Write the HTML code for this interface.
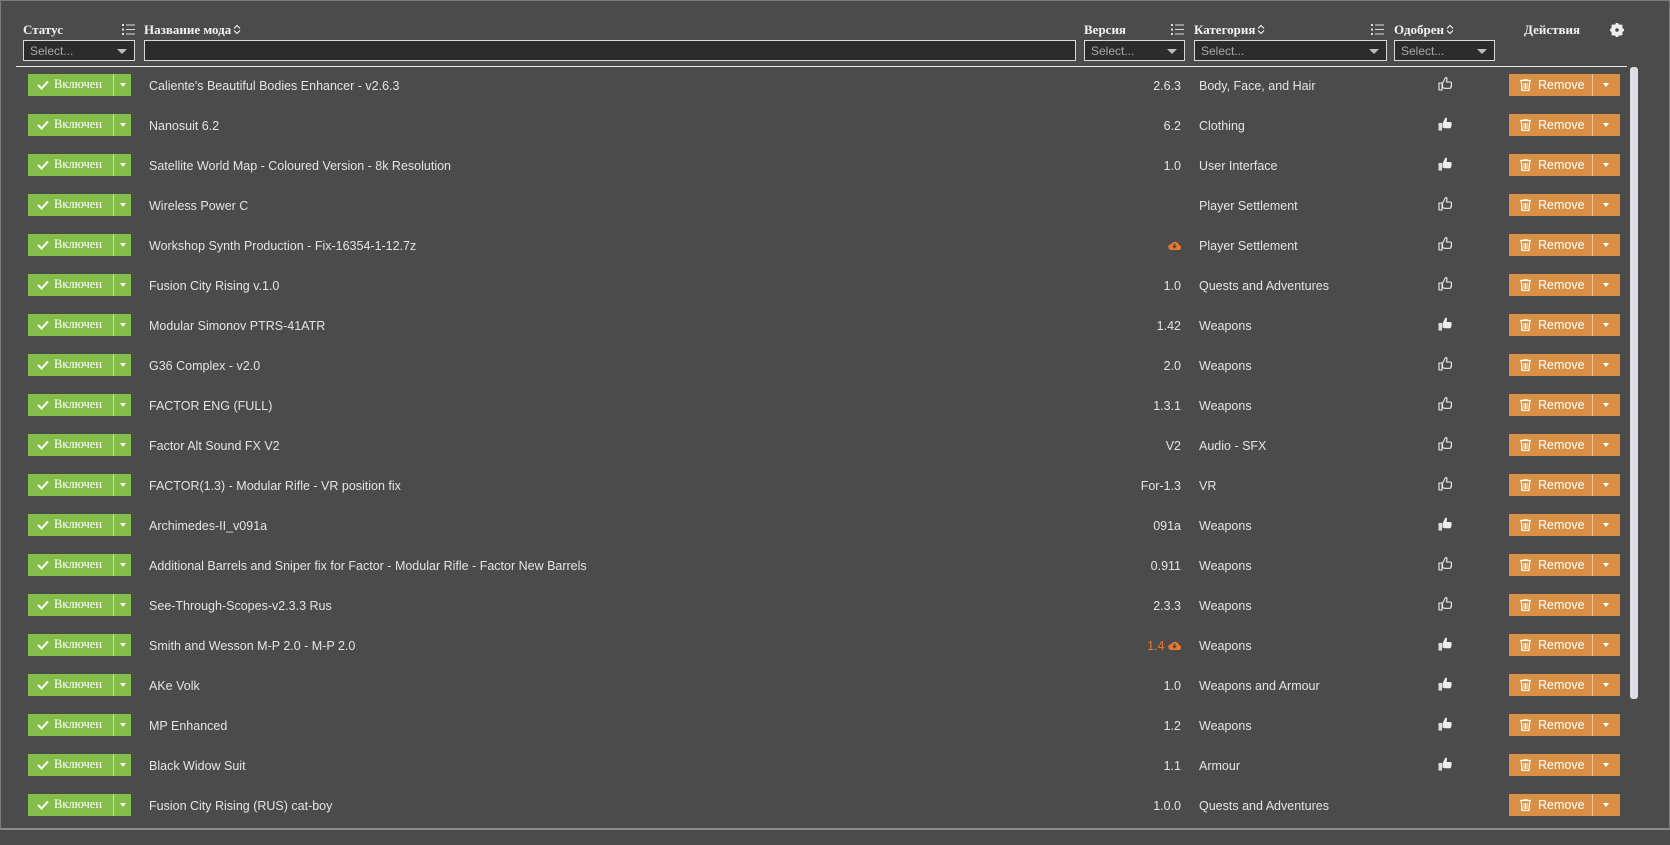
<!DOCTYPE html>
<html><head><meta charset="utf-8"><style>
*{box-sizing:border-box;margin:0;padding:0}
body{width:1670px;height:833px;background:#4b4b4b;font-family:"Liberation Sans",sans-serif;color:#e4e4e4;position:relative;overflow:hidden}
.frame{position:absolute;left:0;top:0;width:1670px;height:830px;border:1px solid #7a7a7a;border-bottom:2px solid #8a8a8a}
.a{position:absolute}
.hl{font-family:"Liberation Serif",serif;font-weight:bold;font-size:13px;color:#f2f2f2;top:22px}
.hl svg{vertical-align:-1px;margin-left:2px}
.sel{position:absolute;top:40px;height:21px;background:#2b2c2b;border:1px solid #d8d8d8;font-size:12px;color:#a9a9a9;padding:3px 0 0 6px}
.sel.dd:after{content:"";position:absolute;right:7px;top:8px;border-left:5px solid transparent;border-right:5px solid transparent;border-top:5px solid #bbb}
.row{position:absolute;left:0;width:1670px;height:40px;font-size:12.5px}
.en{position:absolute;left:28px;top:-11px;width:103px;height:22px;background:#85bd4a;color:#fff;font-family:"Liberation Serif",serif;font-size:12.5px}
.en .t{position:absolute;left:9px;top:3px}
.en .s{position:absolute;left:85px;top:0;width:1px;height:22px;background:#c7e2a8}
.en .c{position:absolute;left:92px;top:9px;border-left:3.5px solid transparent;border-right:3.5px solid transparent;border-top:4px solid #fff}
.nm{position:absolute;left:149px;top:-6px}
.ver{position:absolute;right:489px;top:-6px}
.cat{position:absolute;left:1199px;top:-6px}
.th{position:absolute;left:1438px;top:-9px}
.rm{position:absolute;left:1509px;top:-11px;width:111px;height:22px;background:#d98f46;color:#fff;font-size:12.5px}
.rm .t{position:absolute;left:29px;top:4px}
.rm .s{position:absolute;left:83px;top:0;width:1px;height:22px;background:#edc49a}
.rm .c{position:absolute;left:94px;top:9px;border-left:3.5px solid transparent;border-right:3.5px solid transparent;border-top:4px solid #fff}
.rm svg{position:absolute;left:11px;top:5px}
.or{color:#e8782a}
</style></head><body>
<div class="frame"></div>
<div class="a hl" style="left:23px">Статус</div>
<div class="a hl" style="left:144px">Название мода<svg width="8" height="11"><path d="M1 4.5L4 1.5 7 4.5M1 6.5L4 9.5 7 6.5" stroke="#eee" stroke-width="1.2" fill="none"/></svg></div>
<div class="a hl" style="left:1084px">Версия</div>
<div class="a hl" style="left:1194px">Категория<svg width="8" height="11"><path d="M1 4.5L4 1.5 7 4.5M1 6.5L4 9.5 7 6.5" stroke="#eee" stroke-width="1.2" fill="none"/></svg></div>
<div class="a hl" style="left:1394px">Одобрен<svg width="8" height="11"><path d="M1 4.5L4 1.5 7 4.5M1 6.5L4 9.5 7 6.5" stroke="#eee" stroke-width="1.2" fill="none"/></svg></div>
<div class="a hl" style="left:1524px">Действия</div>
<svg class="a" style="left:122px;top:23px" width="14" height="13"><g fill="#ddd"><rect x="0" y="1" width="2" height="2"/><rect x="0" y="5.5" width="2" height="2"/><rect x="0" y="10" width="2" height="2"/><rect x="4" y="1.5" width="9" height="1"/><rect x="4" y="6" width="9" height="1"/><rect x="4" y="10.5" width="9" height="1"/></g></svg>
<svg class="a" style="left:1171px;top:23px" width="14" height="13"><g fill="#ddd"><rect x="0" y="1" width="2" height="2"/><rect x="0" y="5.5" width="2" height="2"/><rect x="0" y="10" width="2" height="2"/><rect x="4" y="1.5" width="9" height="1"/><rect x="4" y="6" width="9" height="1"/><rect x="4" y="10.5" width="9" height="1"/></g></svg>
<svg class="a" style="left:1371px;top:23px" width="14" height="13"><g fill="#ddd"><rect x="0" y="1" width="2" height="2"/><rect x="0" y="5.5" width="2" height="2"/><rect x="0" y="10" width="2" height="2"/><rect x="4" y="1.5" width="9" height="1"/><rect x="4" y="6" width="9" height="1"/><rect x="4" y="10.5" width="9" height="1"/></g></svg>
<svg class="a" style="left:1610px;top:23px" width="14" height="14" viewBox="0 0 14 14"><circle cx="7" cy="7" r="4.5" fill="none" stroke="#eee" stroke-width="3"/><g stroke="#eee" stroke-width="2.6"><line x1="7" y1="0" x2="7" y2="14"/><line x1="0" y1="7" x2="14" y2="7"/><line x1="2" y1="2" x2="12" y2="12"/><line x1="12" y1="2" x2="2" y2="12"/></g><circle cx="7" cy="7" r="1.8" fill="#4b4b4b"/></svg>
<div class="sel dd" style="left:23px;width:112px">Select...</div>
<div class="sel" style="left:144px;width:932px"></div>
<div class="sel dd" style="left:1084px;width:101px">Select...</div>
<div class="sel dd" style="left:1194px;width:193px">Select...</div>
<div class="sel dd" style="left:1394px;width:101px">Select...</div>
<div class="a" style="left:16px;top:66px;width:1611px;height:1px;background:#e8e8e8"></div>
<div class="a" style="left:1630px;top:67px;width:8px;height:632px;background:#dcdfe3;border-radius:3px"></div>
<div id="rows"></div>
<script>
var d=[["Caliente's Beautiful Bodies Enhancer - v2.6.3","2.6.3","Body, Face, and Hair",0],
["Nanosuit 6.2","6.2","Clothing",1],
["Satellite World Map - Coloured Version - 8k Resolution","1.0","User Interface",1],
["Wireless Power C","","Player Settlement",0],
["Workshop Synth Production - Fix-16354-1-12.7z","C","Player Settlement",0],
["Fusion City Rising v.1.0","1.0","Quests and Adventures",0],
["Modular Simonov PTRS-41ATR","1.42","Weapons",1],
["G36 Complex - v2.0","2.0","Weapons",0],
["FACTOR ENG (FULL)","1.3.1","Weapons",0],
["Factor Alt Sound FX V2","V2","Audio - SFX",0],
["FACTOR(1.3) - Modular Rifle - VR position fix","For-1.3","VR",0],
["Archimedes-II_v091a","091a","Weapons",1],
["Additional Barrels and Sniper fix for Factor - Modular Rifle - Factor New Barrels","0.911","Weapons",0],
["See-Through-Scopes-v2.3.3 Rus","2.3.3","Weapons",0],
["Smith and Wesson M-P 2.0 - M-P 2.0","1.4C","Weapons",1],
["AKe Volk","1.0","Weapons and Armour",1],
["MP Enhanced","1.2","Weapons",1],
["Black Widow Suit","1.1","Armour",1],
["Fusion City Rising (RUS) cat-boy","1.0.0","Quests and Adventures",2]];
var cloud='<svg width="13" height="11" viewBox="0 0 13 11" style="vertical-align:-1px"><path d="M3 10h7.5a2.5 2.5 0 0 0 .3-5A3.8 3.8 0 0 0 3.6 4 3 3 0 0 0 3 10z" fill="#e8782a"/><path d="M6.5 3.5v4M4.8 6l1.7 1.8L8.2 6" stroke="#4b4b4b" stroke-width="1.3" fill="none"/></svg>';
var up='<svg width="14" height="15" viewBox="0 0 14 15"><path d="M1 7h3v7H1zM4.5 7.5L7 2.5c.3-1.3 2.2-1.2 2 .5L8.5 6H12.5c1 0 1.4 1 .9 1.7.6.5.4 1.3-.1 1.6.4.5.2 1.3-.4 1.5.3.7-.1 1.5-1 1.5H6.5l-2-.8z" fill="none" stroke="#eee" stroke-width="1.1"/></svg>';
var upf='<svg width="14" height="15" viewBox="0 0 14 15"><path d="M0.5 7h3.5v7.5H.5z" fill="#ddd"/><path d="M4.5 7.5L7 2.5c.3-1.3 2.2-1.2 2 .5L8.5 6H12.5c1 0 1.4 1 .9 1.7.6.5.4 1.3-.1 1.6.4.5.2 1.3-.4 1.5.3.7-.1 1.5-1 1.5H6.5l-2-.8z" fill="#eee"/></svg>';
var trash='<svg width="11" height="12" viewBox="0 0 11 12"><path d="M0 1.5h11M4 1.5V0h3v1.5M1.3 2.5l.7 9h7l.7-9" stroke="#fff" stroke-width="1.3" fill="none"/><path d="M4 4v6M5.5 4v6M7 4v6" stroke="#fff" stroke-width=".9"/></svg>';
var h='';
d.forEach(function(r,i){var y=85+40*i;var v=r[1];
if(v=="C")v=cloud;else if(v=="1.4C")v='<span class="or">1.4</span> '+cloud;
h+='<div class="row" style="top:'+y+'px"><div class="en"><svg style="position:absolute;left:9px;top:6px" width="12" height="10"><path d="M1 5l3.5 3.5L11 1.5" stroke="#fff" stroke-width="2" fill="none"/></svg><span class="t" style="left:26px">Включен</span><i class="s"></i><i class="c"></i></div><div class="nm">'+r[0]+'</div><div class="ver">'+v+'</div><div class="cat">'+r[2]+'</div><div class="th">'+(r[3]==0?up:r[3]==1?upf:'')+'</div><div class="rm">'+trash+'<span class="t">Remove</span><i class="s"></i><i class="c"></i></div></div>';});
document.getElementById('rows').innerHTML=h;
</script>
</body></html>
